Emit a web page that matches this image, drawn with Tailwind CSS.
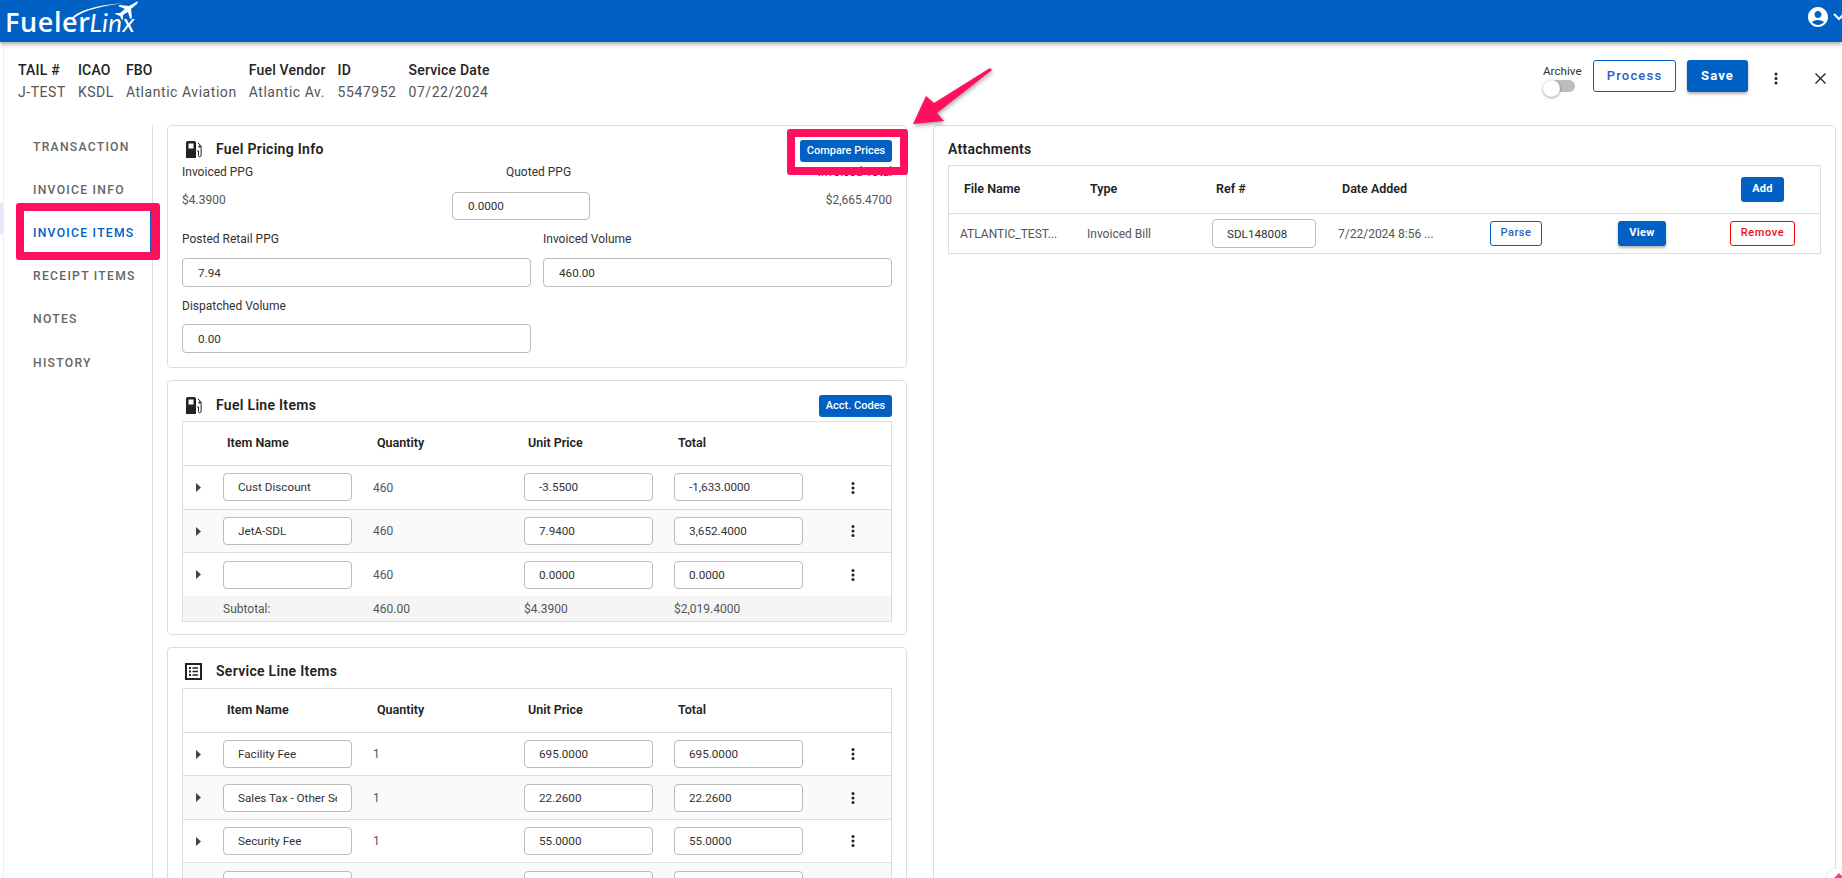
<!DOCTYPE html>
<html lang="en">
<head>
    <meta charset="UTF-8">
    <meta name="viewport" content="width=device-width, initial-scale=1.0">
    <title>Invoice Items</title>
    <script src="https://cdn.jsdelivr.net/npm/@tailwindcss/browser@4"></script>
</head>
<body class="[font-family:Roboto,sans-serif] text-[#333] bg-white">
<div class="relative h-[878px] w-[1842px] overflow-hidden flex flex-col">
    <!-- top bar -->
    <header class="relative z-10 h-[42px] shrink-0 bg-[#0060c3] shadow-[0_2px_4px_rgba(0,0,0,.35)] flex items-center justify-between">
        <div class="relative h-[42px] w-[145px]">
            <div class="flex items-baseline pl-[5px] pt-[4px] text-white text-[27px] leading-[36px]">
                <span class="[font-family:'Open_Sans',sans-serif] font-semibold tracking-[.6px]">Fueler</span><span class="[font-family:Lato,sans-serif] italic text-[26px] tracking-[.3px] ml-[-1px]">Linx</span>
            </div>
            <svg class="absolute left-0 top-0" width="145" height="42" viewBox="0 0 145 42" fill="none">
                <path d="M71 19C78 10 98 5 124 3C102 6 84 10 74 18Z" fill="#fff"/>
                <path d="M138 1L129 6L120 5L118 6L125 9L120 13L116 13L115 14L120 16L122 20L123 19L123 15L128 12L130 19L132 18L131 9L137 4Z" fill="#fff"/>
            </svg>
        </div>
        <div class="flex items-center gap-[3px] mt-[-8px] mr-[-3px]">
            <svg width="24" height="24" viewBox="0 0 24 24" fill="#fff"><path d="M12 2C6.48 2 2 6.48 2 12s4.48 10 10 10 10-4.48 10-10S17.52 2 12 2zm0 4c1.93 0 3.5 1.57 3.5 3.5S13.93 13 12 13s-3.5-1.57-3.5-3.5S10.07 6 12 6zm0 14c-2.03 0-4.43-.82-6.140-2.880C7.550 15.800 9.680 15 12 15s4.450.8 6.140 2.120C16.430 19.180 14.030 20 12 20z"/></svg>
            <svg width="12" height="8" viewBox="0 0 12 8" fill="none"><path d="M1 1l5 5 5-5" stroke="#fff" stroke-width="2"/></svg>
        </div>
    </header>

    <!-- transaction summary + actions -->
    <div class="h-[83px] shrink-0 flex justify-between pl-[18px] pr-[16px] pt-[18px] text-[14px] leading-[20px]">
        <div class="flex gap-[12px]">
            <div><div class="font-medium tracking-[.2px] text-[#222]">TAIL #</div><div class="mt-[2px] tracking-[.55px] text-[#555]">J-TEST</div></div>
            <div><div class="font-medium tracking-[.2px] text-[#222]">ICAO</div><div class="mt-[2px] tracking-[.55px] text-[#555]">KSDL</div></div>
            <div><div class="font-medium tracking-[.2px] text-[#222]">FBO</div><div class="mt-[2px] tracking-[.55px] text-[#555]">Atlantic Aviation</div></div>
            <div><div class="font-medium tracking-[.2px] text-[#222]">Fuel Vendor</div><div class="mt-[2px] tracking-[.55px] text-[#555]">Atlantic Av.</div></div>
            <div><div class="font-medium tracking-[.2px] text-[#222]">ID</div><div class="mt-[2px] tracking-[.55px] text-[#555]">5547952</div></div>
            <div><div class="font-medium tracking-[.2px] text-[#222]">Service Date</div><div class="mt-[2px] tracking-[.55px] text-[#555]">07/22/2024</div></div>
        </div>
        <div class="flex items-start">
            <div class="w-[50px] mt-[3px]">
                <div class="text-[11.700px] leading-[16px] text-[#333]">Archive</div>
                <div class="relative mt-[1px] h-[16px] w-[32px]">
                    <div class="absolute left-[2px] top-0 h-[12px] w-[30px] rounded-full bg-[#bdbdbd]"></div>
                    <div class="absolute left-0 top-0 h-[17px] w-[17px] rounded-full bg-white shadow-[0_1px_3px_rgba(0,0,0,.4)]"></div>
                </div>
            </div>
            <button class="h-[32px] w-[83px] rounded-[3px] border border-[#0060c3] text-[13px] font-medium tracking-[1.2px] text-[#2a62c0]">Process</button>
            <button class="ml-[11px] h-[32px] w-[61px] rounded-[3px] bg-[#0060c3] text-[13px] font-bold tracking-[1.1px] text-white shadow-[0_2px_3px_rgba(0,0,0,.3)]">Save</button>
            <svg class="ml-[26px] mt-[12px]" width="4" height="13" viewBox="0 0 4 13" fill="#222"><circle cx="2" cy="2" r="1.500"/><circle cx="2" cy="6.500" r="1.500"/><circle cx="2" cy="11" r="1.500"/></svg>
            <svg class="ml-[37px] mt-[13px]" width="11" height="11" viewBox="0 0 11 11" fill="none"><path d="M.5.500l10 10M10.500.500l-10 10" stroke="#222" stroke-width="1.300"/></svg>
        </div>
    </div>

    <div class="flex flex-1 min-h-0">
        <!-- side nav -->
        <nav class="w-[153px] shrink-0 border-r border-[#ddd] pl-[33px] pt-[1px] text-[12.200px] font-medium tracking-[1.25px] text-[#666]">
            <div class="h-[43px] flex items-center">TRANSACTION</div>
            <div class="h-[43px] flex items-center">INVOICE INFO</div>
            <div class="h-[43px] flex items-center text-[#0060c3]">INVOICE ITEMS</div>
            <div class="h-[43px] flex items-center">RECEIPT ITEMS</div>
            <div class="h-[43px] flex items-center">NOTES</div>
            <div class="h-[44px] flex items-center">HISTORY</div>
        </nav>

        <!-- left column -->
        <div class="ml-[14px] w-[740px] shrink-0 flex flex-col gap-[12px] text-[12px]">
            <section class="h-[243px] shrink-0 rounded-[4px] border border-[#ddd] px-[14px] pt-[14px]">
                <div class="flex h-[22px] items-center justify-between">
                    <div class="flex items-center pl-[4px] mt-[-3px]">
                        <svg width="16" height="17" viewBox="0 0 16 17"><path d="M0 2a2 2 0 0 1 2-2h6a2 2 0 0 1 2 2v15H0zM2.500 2.500v5h5v-5z" fill="#222"/><path d="M11 10h1.500v4.500a1.300 1.300 0 0 0 2.600 0V5L12 2" fill="none" stroke="#222" stroke-width="1"/><path d="M12.500 4.500h2v2h-2z" fill="#222"/></svg>
                        <h2 class="ml-[14px] text-[14px] font-semibold tracking-[.3px] text-[#222]">Fuel Pricing Info</h2>
                    </div>
                    <button class="h-[22px] w-[92px] rounded-[3px] bg-[#0060c3] text-[11px] font-medium text-white">Compare Prices</button>
                </div>
                <div class="grid grid-cols-[270px_138px_1fr] mt-[2px]">
                    <div class="h-[28px] leading-[16px]">Invoiced PPG</div>
                    <div class="h-[28px] leading-[16px] pl-[54px] whitespace-nowrap">Quoted PPG</div>
                    <div class="h-[28px] leading-[16px] text-right">Invoiced Total</div>
                    <div class="leading-[16px] text-[#555]">$4.3900</div>
                    <input class="h-[28px] w-[138px] rounded-[4px] border border-[#bbb] pl-[15px] text-[11.700px]" value="0.0000">
                    <div class="leading-[16px] text-right text-[#555]">$2,665.4700</div>
                </div>
                <div class="grid grid-cols-[349px_349px] gap-x-[12px] mt-[11px]">
                    <div class="h-[27px] leading-[16px]">Posted Retail PPG</div>
                    <div class="h-[27px] leading-[16px]">Invoiced Volume</div>
                    <input class="h-[29px] rounded-[4px] border border-[#bbb] pl-[15px] text-[11.700px]" value="7.94">
                    <input class="h-[29px] rounded-[4px] border border-[#bbb] pl-[15px] text-[11.700px]" value="460.00">
                    <div class="h-[26px] mt-[11px] leading-[16px]">Dispatched Volume</div>
                    <div></div>
                    <input class="h-[29px] rounded-[4px] border border-[#bbb] pl-[15px] text-[11.700px]" value="0.00">
                </div>
            </section>

            <section class="h-[255px] shrink-0 rounded-[4px] border border-[#ddd] px-[14px] pt-[11px]">
                <div class="flex h-[26px] mb-[3px] items-center justify-between">
                    <div class="flex items-center pl-[4px]">
                        <svg width="16" height="17" viewBox="0 0 16 17"><path d="M0 2a2 2 0 0 1 2-2h6a2 2 0 0 1 2 2v15H0zM2.500 2.500v5h5v-5z" fill="#222"/><path d="M11 10h1.500v4.500a1.300 1.300 0 0 0 2.600 0V5L12 2" fill="none" stroke="#222" stroke-width="1"/><path d="M12.500 4.500h2v2h-2z" fill="#222"/></svg>
                        <h2 class="ml-[14px] text-[14px] font-semibold tracking-[.3px] text-[#222]">Fuel Line Items</h2>
                    </div>
                    <button class="mt-[2px] h-[22px] w-[73px] rounded-[3px] bg-[#0060c3] text-[11px] font-medium text-white">Acct. Codes</button>
                </div>
                <div class="border border-[#ddd]">
                    <div class="grid h-[44px] grid-cols-[40px_150px_151px_150px_1fr] items-center border-b border-[#ddd] text-[12.500px] font-semibold text-[#222]">
                        <div></div><div class="pl-[4px]">Item Name</div><div class="pl-[4px]">Quantity</div><div class="pl-[4px]">Unit Price</div><div class="pl-[4px]">Total</div>
                    </div>
                    <div class="grid h-[44px] grid-cols-[40px_150px_151px_150px_1fr] items-center border-b border-[#ddd]">
                        <svg class="ml-[13px]" width="5" height="9" viewBox="0 0 5 9" fill="#444"><path d="M0 0l5 4.500L0 9z"/></svg>
                        <input class="mb-[1px] h-[28px] w-[129px] rounded-[4px] border border-[#bbb] bg-white pl-[14px] text-[11.700px]" value="Cust Discount">
                        <div class="text-[#555]">460</div>
                        <input class="mb-[1px] h-[28px] w-[129px] rounded-[4px] border border-[#bbb] bg-white pl-[14px] text-[11.700px]" value="-3.5500">
                        <div class="flex items-center"><input class="mb-[1px] h-[28px] w-[129px] rounded-[4px] border border-[#bbb] bg-white pl-[14px] text-[11.700px]" value="-1,633.0000"><svg class="ml-[48px]" width="4" height="12" viewBox="0 0 4 12" fill="#222"><circle cx="2" cy="1.500" r="1.500"/><circle cx="2" cy="6" r="1.500"/><circle cx="2" cy="10.500" r="1.500"/></svg></div>
                    </div>
                    <div class="grid h-[43px] grid-cols-[40px_150px_151px_150px_1fr] items-center border-b border-[#ddd] bg-[#fafafa]">
                        <svg class="ml-[13px]" width="5" height="9" viewBox="0 0 5 9" fill="#444"><path d="M0 0l5 4.500L0 9z"/></svg>
                        <input class="h-[28px] w-[129px] rounded-[4px] border border-[#bbb] bg-white pl-[14px] text-[11.700px]" value="JetA-SDL">
                        <div class="text-[#555]">460</div>
                        <input class="h-[28px] w-[129px] rounded-[4px] border border-[#bbb] bg-white pl-[14px] text-[11.700px]" value="7.9400">
                        <div class="flex items-center"><input class="h-[28px] w-[129px] rounded-[4px] border border-[#bbb] bg-white pl-[14px] text-[11.700px]" value="3,652.4000"><svg class="ml-[48px]" width="4" height="12" viewBox="0 0 4 12" fill="#222"><circle cx="2" cy="1.500" r="1.500"/><circle cx="2" cy="6" r="1.500"/><circle cx="2" cy="10.500" r="1.500"/></svg></div>
                    </div>
                    <div class="grid h-[43px] grid-cols-[40px_150px_151px_150px_1fr] items-center">
                        <svg class="ml-[13px]" width="5" height="9" viewBox="0 0 5 9" fill="#444"><path d="M0 0l5 4.500L0 9z"/></svg>
                        <input class="h-[28px] w-[129px] rounded-[4px] border border-[#bbb] bg-white pl-[14px] text-[11.700px]" value="">
                        <div class="text-[#555]">460</div>
                        <input class="h-[28px] w-[129px] rounded-[4px] border border-[#bbb] bg-white pl-[14px] text-[11.700px]" value="0.0000">
                        <div class="flex items-center"><input class="h-[28px] w-[129px] rounded-[4px] border border-[#bbb] bg-white pl-[14px] text-[11.700px]" value="0.0000"><svg class="ml-[48px]" width="4" height="12" viewBox="0 0 4 12" fill="#222"><circle cx="2" cy="1.500" r="1.500"/><circle cx="2" cy="6" r="1.500"/><circle cx="2" cy="10.500" r="1.500"/></svg></div>
                    </div>
                    <div class="grid h-[25px] grid-cols-[40px_150px_151px_150px_1fr] items-center bg-[#f5f5f5] text-[#555]">
                        <div></div><div>Subtotal:</div><div>460.00</div><div>$4.3900</div><div>$2,019.4000</div>
                    </div>
                </div>
            </section>

            <section class="shrink-0 rounded-[4px] border border-[#ddd] px-[14px] pt-[10px]">
                <div class="flex h-[26px] mb-[4px] items-center">
                    <div class="flex items-center pl-[3px]">
                        <svg width="17" height="17" viewBox="0 0 17 17" fill="none"><rect x="1" y="1" width="15" height="15" stroke="#222" stroke-width="2"/><path d="M4 4h2v2H4zM4 7.500h2v2H4zM4 11h2v2H4z" fill="#222"/><path d="M7.500 5h5.500M7.500 8.500h5.500M7.500 12h5.500" stroke="#222" stroke-width="1.300"/></svg>
                        <h2 class="ml-[14px] text-[14px] font-semibold tracking-[.3px] text-[#222]">Service Line Items</h2>
                    </div>
                </div>
                <div class="border border-[#ddd]">
                    <div class="grid h-[44px] grid-cols-[40px_150px_151px_150px_1fr] items-center border-b border-[#ddd] text-[12.500px] font-semibold text-[#222]">
                        <div></div><div class="pl-[4px]">Item Name</div><div class="pl-[4px]">Quantity</div><div class="pl-[4px]">Unit Price</div><div class="pl-[4px]">Total</div>
                    </div>
                    <div class="grid h-[43px] grid-cols-[40px_150px_151px_150px_1fr] items-center border-b border-[#ddd]">
                        <svg class="ml-[13px]" width="5" height="9" viewBox="0 0 5 9" fill="#444"><path d="M0 0l5 4.500L0 9z"/></svg>
                        <input class="h-[28px] w-[129px] rounded-[4px] border border-[#bbb] bg-white pl-[14px] text-[11.700px]" value="Facility Fee">
                        <div class="text-[#555]">1</div>
                        <input class="h-[28px] w-[129px] rounded-[4px] border border-[#bbb] bg-white pl-[14px] text-[11.700px]" value="695.0000">
                        <div class="flex items-center"><input class="h-[28px] w-[129px] rounded-[4px] border border-[#bbb] bg-white pl-[14px] text-[11.700px]" value="695.0000"><svg class="ml-[48px]" width="4" height="12" viewBox="0 0 4 12" fill="#222"><circle cx="2" cy="1.500" r="1.500"/><circle cx="2" cy="6" r="1.500"/><circle cx="2" cy="10.500" r="1.500"/></svg></div>
                    </div>
                    <div class="grid h-[44px] grid-cols-[40px_150px_151px_150px_1fr] items-center border-b border-[#ddd] bg-[#fafafa]">
                        <svg class="ml-[13px]" width="5" height="9" viewBox="0 0 5 9" fill="#444"><path d="M0 0l5 4.500L0 9z"/></svg>
                        <input class="h-[28px] w-[129px] rounded-[4px] border border-[#bbb] bg-white pl-[14px] pr-[14px] text-[11.700px]" value="Sales Tax - Other Services">
                        <div class="text-[#555]">1</div>
                        <input class="h-[28px] w-[129px] rounded-[4px] border border-[#bbb] bg-white pl-[14px] text-[11.700px]" value="22.2600">
                        <div class="flex items-center"><input class="h-[28px] w-[129px] rounded-[4px] border border-[#bbb] bg-white pl-[14px] text-[11.700px]" value="22.2600"><svg class="ml-[48px]" width="4" height="12" viewBox="0 0 4 12" fill="#222"><circle cx="2" cy="1.500" r="1.500"/><circle cx="2" cy="6" r="1.500"/><circle cx="2" cy="10.500" r="1.500"/></svg></div>
                    </div>
                    <div class="grid h-[43px] grid-cols-[40px_150px_151px_150px_1fr] items-center border-b border-[#ddd]">
                        <svg class="ml-[13px]" width="5" height="9" viewBox="0 0 5 9" fill="#444"><path d="M0 0l5 4.500L0 9z"/></svg>
                        <input class="h-[28px] w-[129px] rounded-[4px] border border-[#bbb] bg-white pl-[14px] text-[11.700px]" value="Security Fee">
                        <div class="text-[#555]">1</div>
                        <input class="h-[28px] w-[129px] rounded-[4px] border border-[#bbb] bg-white pl-[14px] text-[11.700px]" value="55.0000">
                        <div class="flex items-center"><input class="h-[28px] w-[129px] rounded-[4px] border border-[#bbb] bg-white pl-[14px] text-[11.700px]" value="55.0000"><svg class="ml-[48px]" width="4" height="12" viewBox="0 0 4 12" fill="#222"><circle cx="2" cy="1.500" r="1.500"/><circle cx="2" cy="6" r="1.500"/><circle cx="2" cy="10.500" r="1.500"/></svg></div>
                    </div>
                    <div class="grid h-[44px] grid-cols-[40px_150px_151px_150px_1fr] items-center bg-[#fafafa]">
                        <div></div>
                        <input class="h-[28px] w-[129px] rounded-[4px] border border-[#bbb] bg-white" value="">
                        <div></div>
                        <input class="h-[28px] w-[129px] rounded-[4px] border border-[#bbb] bg-white" value="">
                        <input class="h-[28px] w-[129px] rounded-[4px] border border-[#bbb] bg-white" value="">
                    </div>
                </div>
            </section>
        </div>

        <!-- attachments -->
        <section class="ml-[26px] h-[800px] w-[903px] shrink-0 rounded-[4px] border border-[#ddd] px-[14px] pt-[13px] text-[12px]">
            <h2 class="h-[26px] text-[14px] font-semibold leading-[20px] tracking-[.25px] text-[#222]">Attachments</h2>
            <div class="w-[873px] border border-[#ddd]">
                <div class="grid h-[48px] grid-cols-[127px_126px_126px_402px_1fr] items-center border-b border-[#ddd] text-[12.500px] font-semibold text-[#222]">
                    <div class="pl-[15px]">File Name</div><div class="pl-[14px]">Type</div><div class="pl-[14px]">Ref #</div><div class="pl-[14px]">Date Added</div>
                    <div class="flex"><button class="ml-[11px] h-[25px] w-[43px] rounded-[3px] bg-[#0060c3] text-[11px] font-bold tracking-[.3px] text-white">Add</button></div>
                </div>
                <div class="grid h-[39px] grid-cols-[127px_126px_126px_152px_128px_112px_1fr] items-center">
                    <div class="pl-[11px] text-[#555]">ATLANTIC_TEST...</div>
                    <div class="pl-[11px] text-[#555]">Invoiced Bill</div>
                    <input class="ml-[10px] h-[29px] w-[104px] rounded-[4px] border border-[#bbb] pl-[14px] text-[11.700px]" value="SDL148008">
                    <div class="pl-[10px] text-[#555]">7/22/2024 8:56 ...</div>
                    <div class="flex"><button class="ml-[10px] h-[25px] w-[52px] rounded-[3px] border border-[#0060c3] text-[11px] font-medium tracking-[.5px] text-[#2a62c0]">Parse</button></div>
                    <div class="flex"><button class="ml-[10px] h-[25px] w-[48px] rounded-[3px] bg-[#0060c3] text-[11px] font-bold tracking-[.3px] text-white shadow-[0_2px_3px_rgba(0,0,0,.3)]">View</button></div>
                    <div class="flex"><button class="ml-[10px] h-[25px] w-[65px] rounded-[3px] border border-[#f00] text-[11px] font-medium tracking-[.6px] text-[#f01010]">Remove</button></div>
                </div>
            </div>
        </section>
    </div>

    <!-- sliver of the page behind the drawer -->
    <div class="absolute left-0 top-[42px] h-[836px] w-[4px] border-r border-[#eee]"></div>
    <div class="absolute left-0 top-[203px] h-[31px] w-[3px] bg-[#e8e8fa]"></div>

    <!-- callouts drawn over the screenshot -->
    <div class="absolute left-[16px] top-[203px] h-[57px] w-[144px] rounded-[3px] border-[8px] border-r-[9px] border-[#ff0f5c]"></div>
    <div class="absolute left-[150px] top-[211px] h-[41px] w-[1px] bg-[#0060c3]"></div>
    <div class="absolute left-[787px] top-[129px] h-[46px] w-[121px] rounded-[3px] border-[8px] border-[#ff0f5c]"></div>
    <svg class="absolute left-[905px] top-[60px] drop-shadow-[1px_2px_2px_rgba(0,0,0,.35)]" width="95" height="72" viewBox="905 60 95 72"><path d="M913 124L926 96L934 103L990 68L992 70L937 113L944 121Z" fill="#ff0f5c"/></svg>
    <div class="absolute left-[1826px] top-[868px] h-[24px] w-[24px] rounded-full bg-white shadow-[0_0_2px_rgba(0,0,0,.2)]"></div>
    <div class="absolute left-[1833px] top-[873px] h-0 w-0 border-x-[6px] border-b-[6px] border-x-transparent border-b-[#ff3d8b]"></div>
</div>
</body>
</html>
